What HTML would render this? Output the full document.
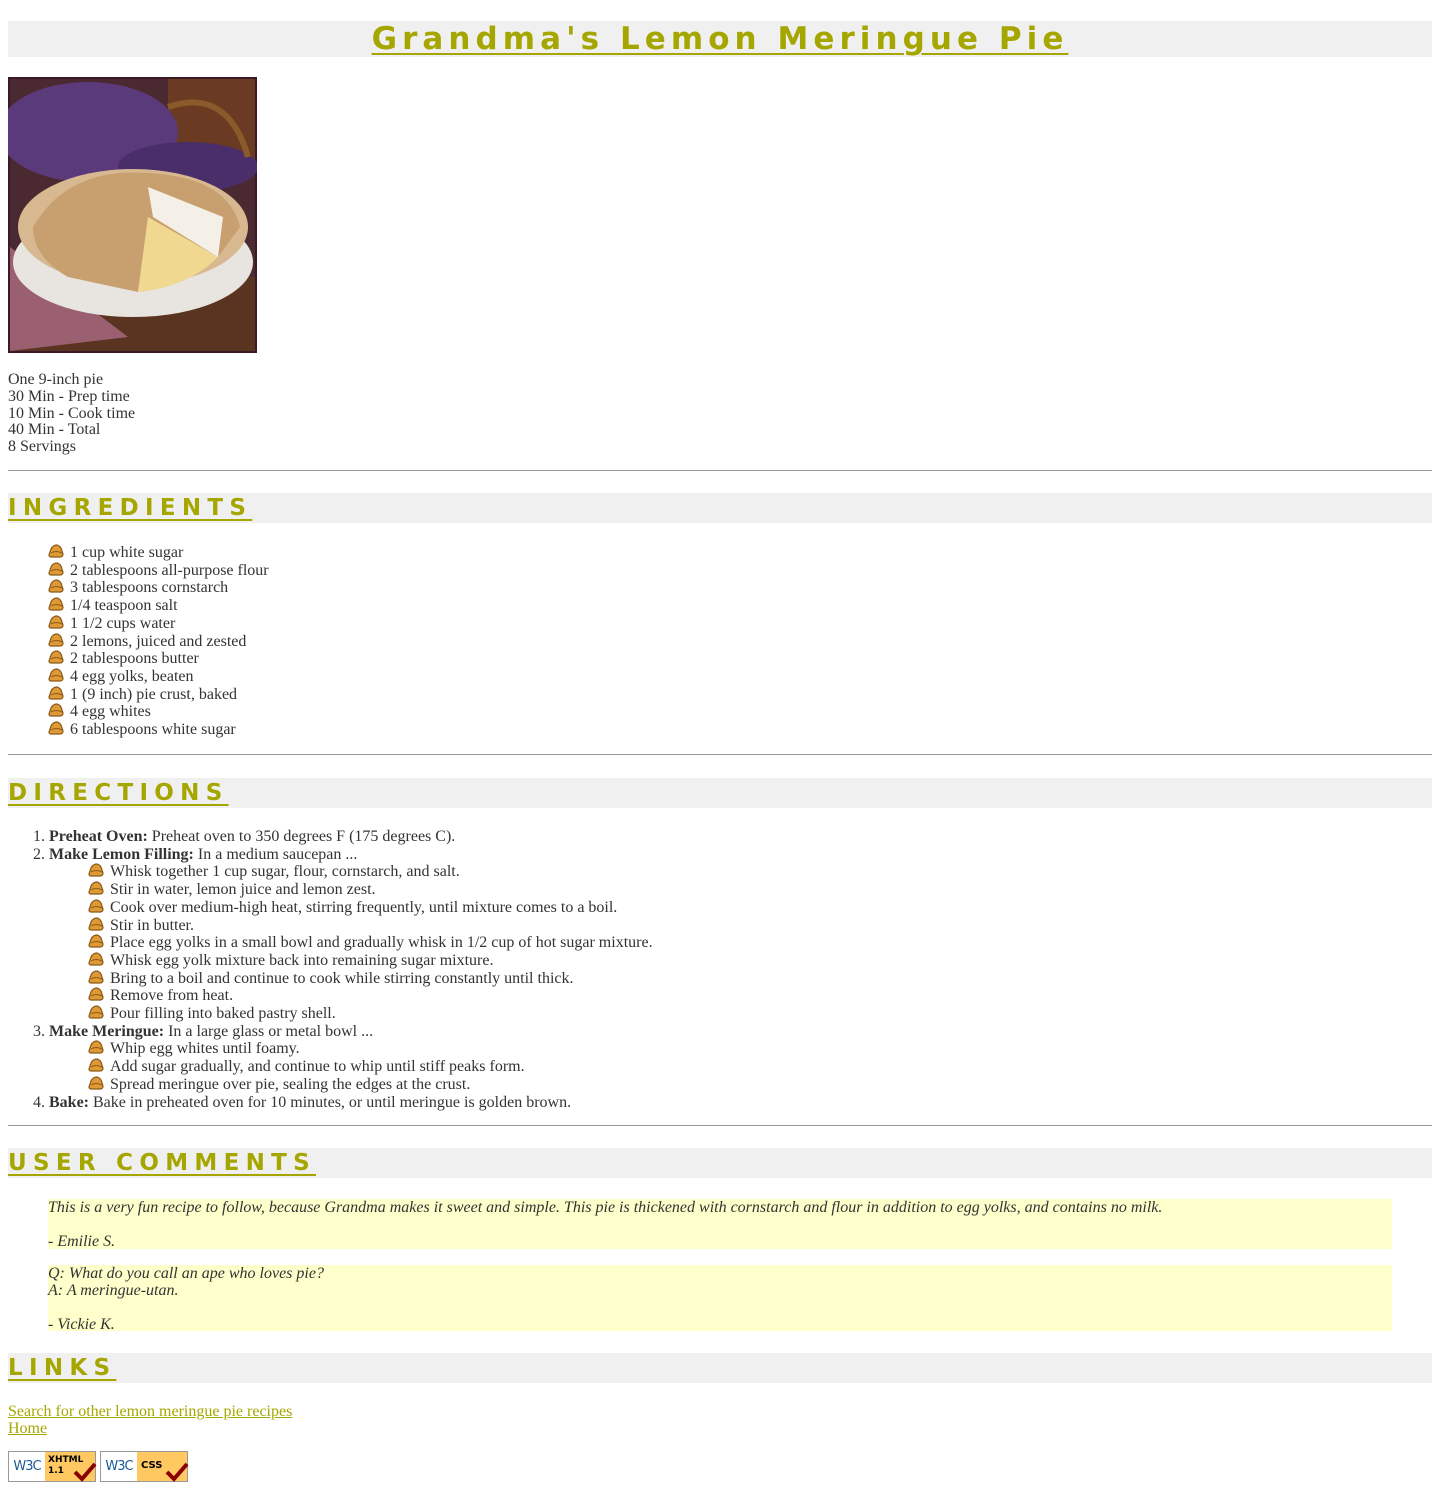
<!DOCTYPE html>
<html><head><meta charset="utf-8"><style>
body{margin:0;width:1440px;height:1494px;position:relative;background:#fff;font-family:"Liberation Serif",serif;font-size:16px;color:#333;overflow:hidden}
.a{position:absolute}
.band{position:absolute;left:8px;width:1424px;background:#f0f0f0}
.band span{font-family:"DejaVu Sans",sans-serif;font-weight:bold;color:#a6a600;text-decoration:underline;text-decoration-thickness:2px;text-underline-offset:4px}
.h2 span{font-size:23px;letter-spacing:6.3px;line-height:30px}
hr{position:absolute;left:8px;width:1424px;margin:0;border:0;border-top:1px solid #999;height:0}
.l{line-height:17.7px}
.ic{display:inline-block;width:16px;height:14px;vertical-align:-1px;margin-right:6px}
a{color:#a6a600}
.cm{position:absolute;left:48px;width:1344px;background:#ffffcc;font-style:italic;line-height:17px}
</style></head><body>
<svg width="0" height="0" style="position:absolute"><defs><symbol id="p" viewBox="0 0 16 14"><path d="M1 11 L3 5 Q5 1 9 1 Q13 2 14 7 L15 10 Q15 13 12 13 L3 13 Q1 13 1 11Z" fill="#e09a35" stroke="#8a5a1a" stroke-width="1.2"/><path d="M3 9 Q8 6 14 9" fill="none" stroke="#8a5a1a" stroke-width="1"/></symbol></defs></svg>
<div class="band" style="top:21px;height:36px;text-align:center"><span style="font-size:31px;letter-spacing:5.05px;line-height:37px">Grandma's Lemon Meringue Pie</span></div>
<svg class="a" style="left:8px;top:77px" width="249" height="276" viewBox="0 0 249 276">
<rect width="249" height="276" fill="#3a1a28"/>
<rect x="2" y="2" width="245" height="272" fill="#4a2a30"/>
<rect x="160" y="2" width="87" height="90" fill="#6a3a22"/>
<ellipse cx="80" cy="55" rx="90" ry="50" fill="#5a3a7a"/>
<ellipse cx="180" cy="90" rx="70" ry="25" fill="#4a2e6a"/>
<path d="M160 30 Q220 10 240 80" stroke="#8a5a2a" stroke-width="6" fill="none"/>
<rect x="2" y="200" width="245" height="74" fill="#5a3420"/>
<path d="M2 170 L120 260 L2 274Z" fill="#9a6070"/>
<ellipse cx="125" cy="185" rx="120" ry="55" fill="#e8e4e0"/>
<ellipse cx="125" cy="150" rx="115" ry="58" fill="#d8b890"/>
<path d="M25 150 Q60 90 140 96 Q220 100 232 150 L210 180 L140 140 L130 215 L60 200 Q25 180 25 150Z" fill="#c8a070"/>
<path d="M140 140 L210 180 Q180 210 130 215Z" fill="#f0d890"/>
<path d="M140 110 L145 140 L210 180 L215 140Z" fill="#f4f0e8"/>
</svg>
<div class="a" style="left:8px;top:372px;line-height:16.8px">One 9-inch pie<br>30 Min - Prep time<br>10 Min - Cook time<br>40 Min - Total<br>8 Servings</div>
<hr style="top:470px">
<div class="band h2" style="top:493px;height:30px"><span>INGREDIENTS</span></div>
<div class="a l" style="left:48px;top:544px">
<svg class="ic"><use href="#p"/></svg>1 cup white sugar<br>
<svg class="ic"><use href="#p"/></svg>2 tablespoons all-purpose flour<br>
<svg class="ic"><use href="#p"/></svg>3 tablespoons cornstarch<br>
<svg class="ic"><use href="#p"/></svg>1/4 teaspoon salt<br>
<svg class="ic"><use href="#p"/></svg>1 1/2 cups water<br>
<svg class="ic"><use href="#p"/></svg>2 lemons, juiced and zested<br>
<svg class="ic"><use href="#p"/></svg>2 tablespoons butter<br>
<svg class="ic"><use href="#p"/></svg>4 egg yolks, beaten<br>
<svg class="ic"><use href="#p"/></svg>1 (9 inch) pie crust, baked<br>
<svg class="ic"><use href="#p"/></svg>4 egg whites<br>
<svg class="ic"><use href="#p"/></svg>6 tablespoons white sugar</div>
<hr style="top:754px">
<div class="band h2" style="top:778px;height:30px"><span>DIRECTIONS</span></div>
<div class="a l" style="left:33px;top:828px;width:1200px">
<div>1. <b>Preheat Oven:</b> Preheat oven to 350 degrees F (175 degrees C).</div>
<div>2. <b>Make Lemon Filling:</b> In a medium saucepan ...</div>
<div style="padding-left:55px">
<svg class="ic"><use href="#p"/></svg>Whisk together 1 cup sugar, flour, cornstarch, and salt.<br>
<svg class="ic"><use href="#p"/></svg>Stir in water, lemon juice and lemon zest.<br>
<svg class="ic"><use href="#p"/></svg>Cook over medium-high heat, stirring frequently, until mixture comes to a boil.<br>
<svg class="ic"><use href="#p"/></svg>Stir in butter.<br>
<svg class="ic"><use href="#p"/></svg>Place egg yolks in a small bowl and gradually whisk in 1/2 cup of hot sugar mixture.<br>
<svg class="ic"><use href="#p"/></svg>Whisk egg yolk mixture back into remaining sugar mixture.<br>
<svg class="ic"><use href="#p"/></svg>Bring to a boil and continue to cook while stirring constantly until thick.<br>
<svg class="ic"><use href="#p"/></svg>Remove from heat.<br>
<svg class="ic"><use href="#p"/></svg>Pour filling into baked pastry shell.</div>
<div>3. <b>Make Meringue:</b> In a large glass or metal bowl ...</div>
<div style="padding-left:55px">
<svg class="ic"><use href="#p"/></svg>Whip egg whites until foamy.<br>
<svg class="ic"><use href="#p"/></svg>Add sugar gradually, and continue to whip until stiff peaks form.<br>
<svg class="ic"><use href="#p"/></svg>Spread meringue over pie, sealing the edges at the crust.</div>
<div>4. <b>Bake:</b> Bake in preheated oven for 10 minutes, or until meringue is golden brown.</div>
</div>
<hr style="top:1125px">
<div class="band h2" style="top:1148px;height:30px"><span>USER COMMENTS</span></div>
<div class="cm" style="top:1199px;height:50px">This is a very fun recipe to follow, because Grandma makes it sweet and simple. This pie is thickened with cornstarch and flour in addition to egg yolks, and contains no milk.<br><br>- Emilie S.</div>
<div class="cm" style="top:1265px;height:66px">Q: What do you call an ape who loves pie?<br>A: A meringue-utan.<br><br>- Vickie K.</div>
<div class="band h2" style="top:1353px;height:30px"><span>LINKS</span></div>
<div class="a" style="left:8px;top:1403px;line-height:17px"><a href="#">Search for other lemon meringue pie recipes</a><br><a href="#">Home</a></div>
<div class="a" style="left:8px;top:1451px;width:88px;height:31px;background:#ffc860;border:1px solid #999;box-sizing:border-box;font-family:'DejaVu Sans',sans-serif">
<div style="position:absolute;left:0;top:0;width:36px;height:29px;background:#fff;color:#1a5a9a;font-size:13px;line-height:29px;text-align:center;letter-spacing:-1px">W3C</div>
<div style="position:absolute;left:39px;top:3px;font-size:9px;font-weight:bold;line-height:11px;color:#000">XHTML<br>1.1</div>
<svg style="position:absolute;left:64px;top:10px" width="24" height="20"><path d="M2 10 L9 17 L22 2" stroke="#8a0000" stroke-width="4" fill="none"/></svg></div>
<div class="a" style="left:100px;top:1451px;width:88px;height:31px;background:#ffc860;border:1px solid #999;box-sizing:border-box;font-family:'DejaVu Sans',sans-serif">
<div style="position:absolute;left:0;top:0;width:36px;height:29px;background:#fff;color:#1a5a9a;font-size:13px;line-height:29px;text-align:center;letter-spacing:-1px">W3C</div>
<div style="position:absolute;left:40px;top:8px;font-size:10px;font-weight:bold;line-height:11px;color:#000">CSS</div>
<svg style="position:absolute;left:64px;top:10px" width="24" height="20"><path d="M2 10 L9 17 L22 2" stroke="#8a0000" stroke-width="4" fill="none"/></svg></div>
</body></html>
